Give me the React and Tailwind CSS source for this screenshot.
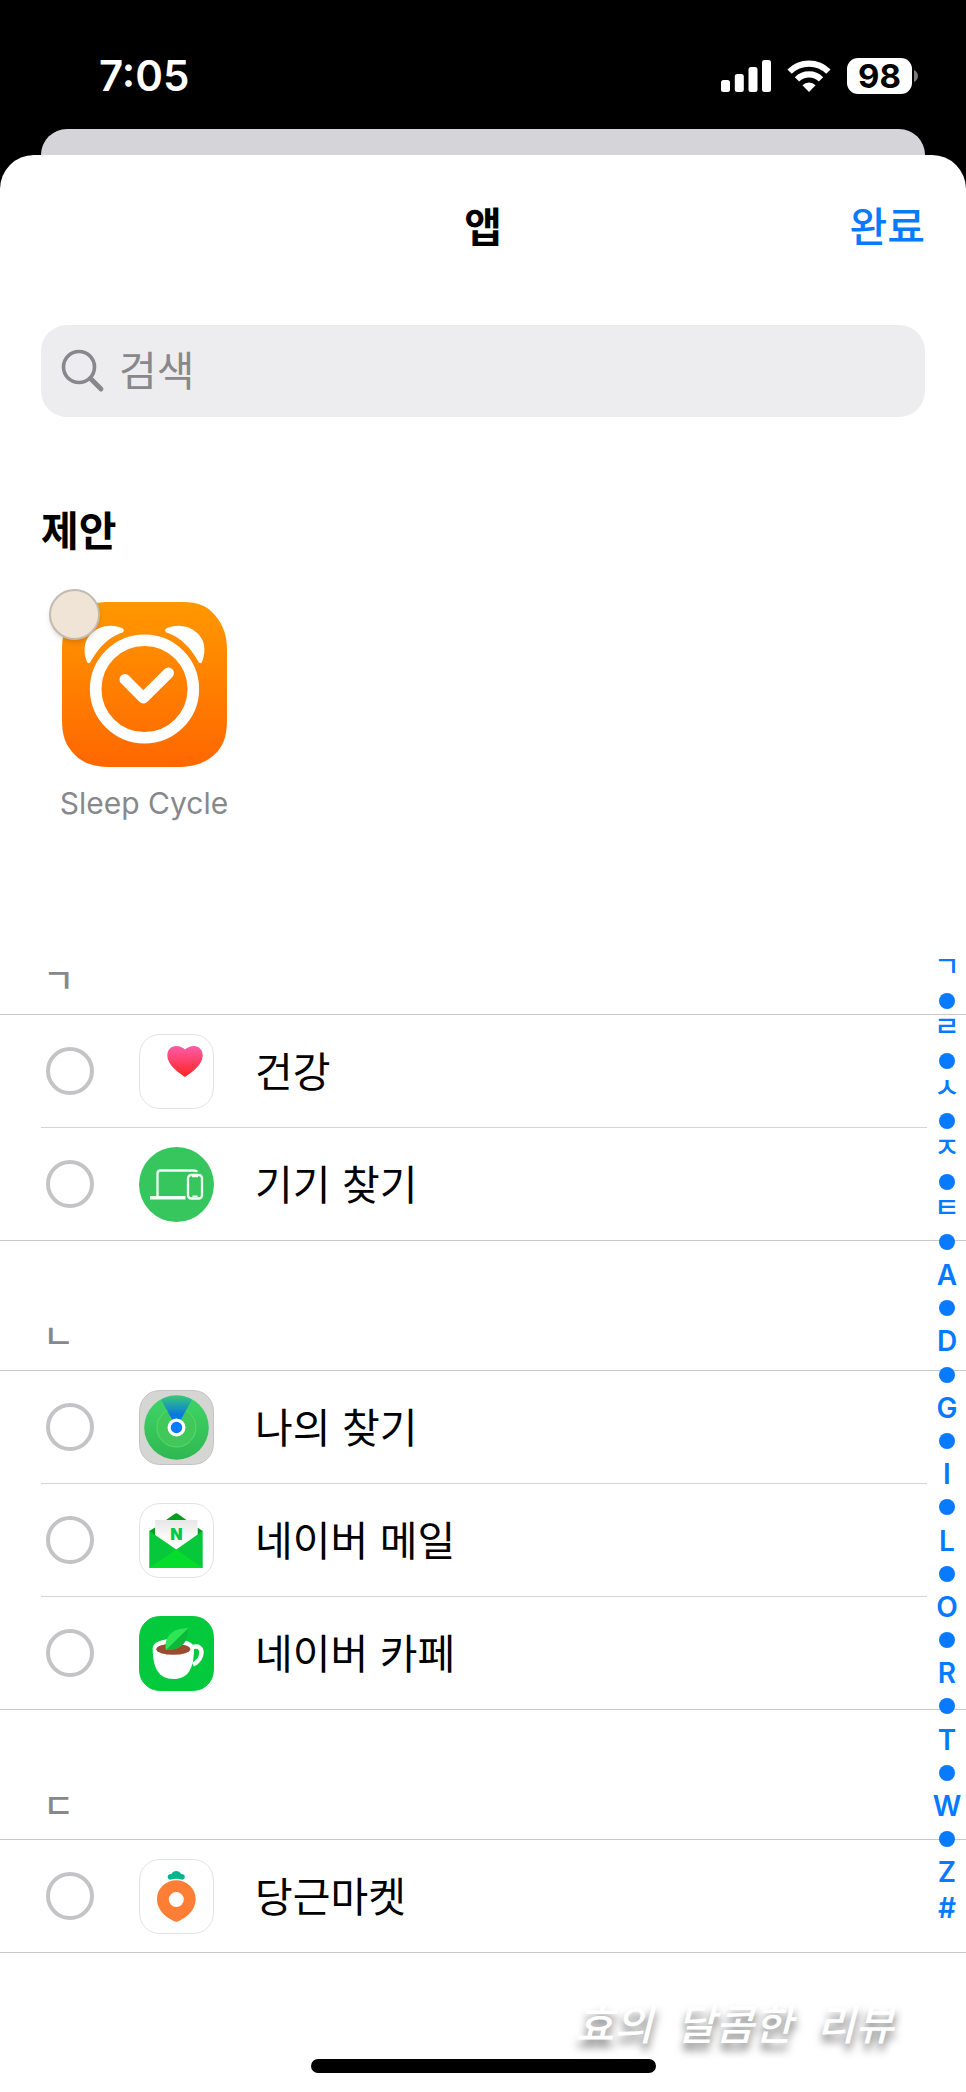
import React from "react";

function SignalIcon() {
  return (
    <svg width="50" height="32" viewBox="0 0 50 32" fill="white" aria-hidden="true">
      <rect x="0" y="20" width="9" height="12" rx="2.5" />
      <rect x="13.8" y="14" width="9" height="18" rx="2.5" />
      <rect x="27.5" y="7" width="9" height="25" rx="2.5" />
      <rect x="41" y="0" width="9" height="32" rx="2.5" />
    </svg>
  );
}

function WifiIcon() {
  return (
    <svg width="44" height="32" viewBox="0 0 44 32" aria-hidden="true">
      <g fill="none" stroke="white" strokeWidth="6.2">
        <path d="M2.6 11.6a27.6 27.6 0 0 1 38.8 0" />
        <path d="M10 19.4a17 17 0 0 1 24 0" />
      </g>
      <path d="M22 32l-6.6-6.8a9.4 9.4 0 0 1 13.2 0z" fill="white" />
    </svg>
  );
}

function Battery() {
  return (
    <div className="flex items-center gap-[2px]">
      <div className="flex h-9 w-[65px] items-center justify-center rounded-[11px] bg-white text-[33px] leading-9 font-bold text-black">
        98
      </div>
      <svg width="4" height="12" viewBox="0 0 4 12" aria-hidden="true">
        <path d="M0 0c2.500 1 4 3.500 4 6s-1.500 5-4 6z" fill="#7b7b7b" />
      </svg>
    </div>
  );
}

function SearchIcon() {
  return (
    <svg width="44" height="44" viewBox="0 0 44 44" fill="none" stroke="#88888c" strokeLinecap="round" aria-hidden="true">
      <circle cx="18" cy="18" r="15.500" strokeWidth="3.600" />
      <path d="M29.500 29.500L40 40" strokeWidth="4.800" />
    </svg>
  );
}

function SleepCycleIcon() {
  return (
    <svg width="165" height="165" viewBox="0 0 165 165" aria-hidden="true">
      <defs>
        <linearGradient id="sleep" x1="0" y1="0" x2="0" y2="1">
          <stop offset="0" stopColor="#ff9800" />
          <stop offset="1" stopColor="#ff6700" />
        </linearGradient>
      </defs>
      <path
        d="M50 0h65c17 0 26 1 35 10s15 20 15 38v69c0 18-4 28-13 36s-20 12-37 12H50c-17 0-28-3-37-12S0 135 0 117V48c0-18 4-28 13-37S33 0 50 0z"
        fill="url(#sleep)"
      />
      <circle cx="82.500" cy="87" r="48.800" fill="none" stroke="white" strokeWidth="11.600" />
      <path d="M63 77.500L81.300 96L106.500 71" fill="none" stroke="white" strokeWidth="11" strokeLinecap="round" strokeLinejoin="round" />
      <path d="M25 60C20 47 23 36 31 30C39 23 50 22 60 26C63 27.500 62 30.500 59 31C46 36 37 45 29 59C28 61.500 26 62 25 60z" fill="white" />
      <path d="M140 60C145 47 142 36 134 30C126 23 115 22 105 26C102 27.500 103 30.500 106 31C119 36 128 45 136 59C137 61.500 139 62 140 60z" fill="white" />
    </svg>
  );
}

const tile = "M24 0.500h27c9 0 13 1.500 17.500 6S74.500 16 74.500 24v27c0 8-1.500 13-6 17.500S60 74.500 51 74.500H24c-9 0-13-1.500-17.500-6S0.500 60 0.500 51V24c0-8 1.500-13 6-17.500S15 0.500 24 0.500z";

function IconFrame({ children }) {
  return (
    <svg className="shrink-0" width="75" height="75" viewBox="0 0 75 75" aria-hidden="true">
      {children}
    </svg>
  );
}

function HealthIcon() {
  return (
    <IconFrame>
      <defs>
        <linearGradient id="heart" x1="0" y1="0" x2="0" y2="1">
          <stop offset="0" stopColor="#fb5cab" />
          <stop offset="1" stopColor="#ff2420" />
        </linearGradient>
      </defs>
      <path d={tile} fill="white" stroke="#e2e2e4" />
      <path d="M46 43C40 39 28.300 31 28.300 21.500C28.300 16 32 12 37 12C41 12 44.500 14 46 15.500C47.500 14 51 12 55 12C60 12 63.700 16 63.700 21.500C63.700 31 52 39 46 43z" fill="url(#heart)" />
    </IconFrame>
  );
}

function FindDevicesIcon() {
  return (
    <IconFrame>
      <circle cx="37.500" cy="37.500" r="37.500" fill="#36c65d" />
      <g fill="none" stroke="#f2fff5" strokeWidth="2.300">
        <path d="M18.500 49.500V26.500q0-3 3-3H54q3.500 0 4 1.500" />
        <path d="M11 50.800H46.500" strokeWidth="3.400" />
        <rect x="49" y="28" width="14" height="23.500" rx="3.200" />
        <path d="M53 29.300h6M53.500 49.500h5" strokeWidth="1.800" />
      </g>
    </IconFrame>
  );
}

function FindMyIcon() {
  return (
    <IconFrame>
      <defs>
        <linearGradient id="radar" x1="0" y1="0" x2="0" y2="1">
          <stop offset="0" stopColor="#3fd567" />
          <stop offset="1" stopColor="#30b850" />
        </linearGradient>
        <linearGradient id="beam" x1="0" y1="0" x2="0" y2="1">
          <stop offset="0" stopColor="#0a84e0" stopOpacity="0.150" />
          <stop offset="0.600" stopColor="#0878e0" />
          <stop offset="1" stopColor="#0878e8" />
        </linearGradient>
      </defs>
      <path d={tile} fill="#d5d5d3" stroke="#c3c3c3" />
      <circle cx="37.500" cy="37.500" r="32.300" fill="url(#radar)" />
      <circle cx="37.500" cy="37.500" r="19.500" fill="#40c95a" stroke="#5bda6a" />
      <path d="M37.500 37.500L22 9.500A32.300 32.300 0 0 1 53 9.500z" fill="url(#beam)" />
      <circle cx="37.500" cy="37.500" r="9" fill="white" />
      <circle cx="37.500" cy="37.500" r="5.700" fill="#087aff" />
    </IconFrame>
  );
}

function MailIcon() {
  return (
    <IconFrame>
      <defs>
        <linearGradient id="paper" x1="0" y1="0" x2="0" y2="1">
          <stop offset="0" stopColor="#e6e6e6" />
          <stop offset="0.500" stopColor="#fafafa" />
        </linearGradient>
      </defs>
      <path d={tile} fill="white" stroke="#e2e2e4" />
      <path d="M27 17L35.500 11q1.800-1.300 3.600 0L47.500 17z" fill="#009f1d" />
      <path d="M10.300 28L16 24.500V34zM63.700 28L58.500 24.500V34z" fill="#009f1d" />
      <path d="M16 17H58.500V34L37.300 50L16 34z" fill="url(#paper)" />
      <path d="M10.300 28L37.300 46.500L63.700 28V65H10.300z" fill="#07c83a" />
      <path d="M10.300 65L37.300 46.500L63.700 65z" fill="#06dc2c" />
      <text x="37.300" y="37" textAnchor="middle" fontFamily="Inter, sans-serif" fontWeight="900" fontSize="16" fill="#03c74b">
        N
      </text>
    </IconFrame>
  );
}

function CafeIcon() {
  return (
    <IconFrame>
      <path d={tile} fill="#03c93d" stroke="#03c93d" />
      <path d="M54 31C65 27.500 65.500 43 54 48.500" fill="none" stroke="white" strokeWidth="4.600" />
      <path d="M13.700 32C13.700 20 55 20 55 32C55 53 49 63 34.300 63S13.700 52 13.700 32z" fill="white" />
      <ellipse cx="34.300" cy="33.200" rx="17" ry="5.600" fill="#9a4c30" />
      <path d="M27 34C25 26 29 18 36 14.500C40 12.500 45 12.500 49.700 11.700C50 24 43 34.500 27 34z" fill="#2fe455" />
      <path d="M49.700 11.700C50 24 43 34.500 27 34z" fill="#0bb83a" />
    </IconFrame>
  );
}

function CarrotIcon() {
  return (
    <IconFrame>
      <path d={tile} fill="white" stroke="#e2e2e4" />
      <path d="M31 20.800C27.500 19.500 28 14.500 32.500 15C34 11 40.500 11 42 15C46.500 14.500 47 19.500 43.500 20.800Q37.300 18.500 31 20.800z" fill="#07b28c" />
      <path
        fillRule="evenodd"
        d="M37.300 21.300C48 21.300 56.700 29.500 56.700 40C56.700 51 48 58 40 62Q37.300 63.300 34.600 62C26.600 58 18 51 18 40C18 29.500 26.600 21.300 37.300 21.300zM37.300 33a7.500 7.500 0 1 0 0 15a7.500 7.500 0 1 0 0-15z"
        fill="#ff7e36"
      />
    </IconFrame>
  );
}

const sections = [
  {
    letter: "ㄱ",
    apps: [
      { name: "건강", Icon: HealthIcon },
      { name: "기기 찾기", Icon: FindDevicesIcon },
    ],
  },
  {
    letter: "ㄴ",
    apps: [
      { name: "나의 찾기", Icon: FindMyIcon },
      { name: "네이버 메일", Icon: MailIcon },
      { name: "네이버 카페", Icon: CafeIcon },
    ],
  },
  { letter: "ㄷ", apps: [{ name: "당근마켓", Icon: CarrotIcon }] },
];

const hangulIndex = ["ㄱ", "ㄹ", "ㅅ", "ㅈ", "ㅌ"];
const latinIndex = ["A", "D", "G", "I", "L", "O", "R", "T", "W", "Z"];

function Dot() {
  return (
    <span className="flex flex-[33] items-center" aria-hidden="true">
      <span className="size-4 rounded-full bg-[#087aff]" />
    </span>
  );
}

function IndexBar() {
  return (
    <nav aria-label="색인" className="absolute top-[11px] right-0 bottom-[26px] flex w-[38px] flex-col items-center text-[#087aff]">
      {hangulIndex.map((l) => (
        <React.Fragment key={l}>
          <a href={"#" + l} className="flex flex-[27] items-start text-[28px] leading-5 font-medium">{l}</a>
          <Dot />
        </React.Fragment>
      ))}
      {latinIndex.map((l, i) => (
        <React.Fragment key={l}>
          <a href={"#" + l} className="flex flex-[33] items-center text-[28px] leading-7 font-semibold">{l}</a>
          {i < latinIndex.length - 1 && <Dot />}
        </React.Fragment>
      ))}
      <a href="#etc" className="flex flex-[38] items-center text-[28px] leading-7 font-semibold">#</a>
    </nav>
  );
}

function AppRow({ name, Icon }) {
  return (
    <li className="ml-[41px] mr-[39px] border-b border-[#d4d4d6] last:mx-0 last:border-[#c8c8ca] last:pl-[41px]">
      <label className="flex h-28 items-center pl-[5px]">
        <input type="checkbox" className="size-12 shrink-0 appearance-none rounded-full border-4 border-[#c4c4c6] bg-white checked:bg-[#087aff]" />
        <span className="ml-[45px]">
          <Icon />
        </span>
        <span className="ml-[41px] pt-[2px] text-[41px] leading-[48px] text-black">{name}</span>
      </label>
    </li>
  );
}

export default function App() {
  return (
    <div className="flex min-h-screen flex-col bg-black font-['Inter','Noto_Sans_CJK_KR',sans-serif]">
      <header className="flex h-[129px] items-center justify-between pt-[23px] pr-12 pl-[99px]">
        <time className="text-[42px] leading-[48px] font-semibold text-white">7:05</time>
        <div className="flex items-center gap-4">
          <SignalIcon />
          <WifiIcon />
          <Battery />
        </div>
      </header>
      <div className="mx-[41px] h-[26px] rounded-t-[26px] bg-[#d5d4d9]" />
      <div className="relative flex flex-1 flex-col">
        <main className="flex flex-1 flex-col rounded-t-[34px] bg-white">
          <div className="grid grid-cols-3 items-center px-[41px] pt-12">
            <h1 className="col-start-2 text-center text-[41px] leading-[48px] font-bold text-black">앱</h1>
            <button type="button" className="justify-self-end text-[41px] leading-[48px] font-medium text-[#087aff]">완료</button>
          </div>
          <label className="mx-[41px] mt-[74px] flex h-[92px] items-center gap-[14px] rounded-[26px] bg-[#ededef] pl-5">
            <SearchIcon />
            <input
              type="search"
              aria-label="검색"
              placeholder="검색"
              className="h-[60px] min-w-0 flex-1 bg-transparent pt-[2px] text-[41px] outline-none placeholder:text-[#88888c]"
            />
          </label>
          <section className="mt-[90px] px-[41px]">
            <h2 className="text-[41px] leading-[48px] font-bold text-black">제안</h2>
            <label className="mt-[47px] flex w-[206px] flex-col items-center">
              <span className="relative">
                <SleepCycleIcon />
                <input type="checkbox" className="absolute -top-[13px] -left-[13px] size-[51px] appearance-none rounded-full border-2 border-[#c2bbb0] bg-[#efe4d6] shadow-md" />
              </span>
              <span className="mt-4 text-[30px] leading-10 whitespace-nowrap text-[#88888c]">Sleep Cycle</span>
            </label>
          </section>
          <div className="relative mt-[123px]">
            {sections.map(({ letter, apps }, i) => (
              <section key={letter} id={letter}>
                <h3
                  className={
                    "flex items-end border-b border-[#c8c8ca] pb-[13px] pl-[43px] text-[34px] leading-10 font-medium text-[#88888c] " +
                    (i === 0 ? "h-[69px]" : "h-[130px]")
                  }
                >
                  {letter}
                </h3>
                <ul>
                  {apps.map((app) => (
                    <AppRow key={app.name} {...app} />
                  ))}
                </ul>
              </section>
            ))}
            <IndexBar />
          </div>
          <footer className="relative mt-auto flex h-[140px] flex-col items-center justify-end pb-5">
            <div className="h-[14px] w-[345px] rounded-full bg-black" />
            <p className="absolute right-[72px] bottom-[38px] flex gap-6 text-[42px] leading-[60px] font-medium text-white italic [text-shadow:0_7px_9px_rgb(0_0_0/0.55)]">
              <span>효의</span>
              <span>달콤한</span>
              <span>리뷰</span>
            </p>
          </footer>
        </main>
      </div>
    </div>
  );
}
